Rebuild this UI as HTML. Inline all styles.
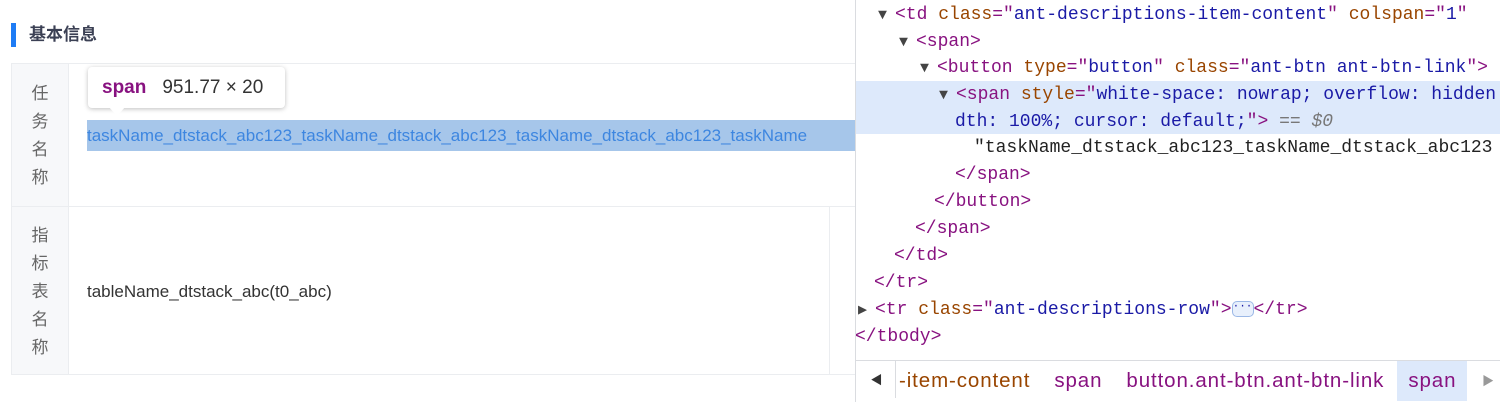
<!DOCTYPE html>
<html><head><meta charset="utf-8"><style>
body{margin:0;width:1500px;height:402px;overflow:hidden;background:#fff;position:relative;font-family:"Liberation Sans","Noto Sans CJK SC",sans-serif}
.abs{position:absolute}
.mono{font-family:"Liberation Mono","DejaVu Sans Mono",monospace;font-size:18px;white-space:pre;line-height:27px;margin-top:2px}
.tag{color:#881280}.attr{color:#994500}.val{color:#1a1aa6}
.tri{color:#444;font-size:15px;display:inline-block;width:17px}
</style></head><body>
<!-- left -->
<div class="abs" style="left:11px;top:23px;width:5px;height:24px;background:#1e7cf5"></div>
<div class="abs" style="left:29px;top:23px;font-size:17px;font-weight:bold;color:#3b4054;line-height:24px">基本信息</div>
<div class="abs" style="left:11px;top:63px;width:844px;height:312px;border:1px solid #ebedf0;border-right:none;box-sizing:border-box"></div>
<div class="abs" style="left:12px;top:64px;width:56px;height:310px;background:#f7f8fa;border-right:1px solid #ebedf0"></div>
<div class="abs" style="left:12px;top:206px;width:843px;height:1px;background:#ebedf0"></div>
<div class="abs" style="left:829px;top:206px;width:1px;height:169px;background:#ebedf0"></div>
<div class="abs" style="left:28px;top:80px;width:24px;font-size:17px;color:#666;line-height:28px;text-align:center">任<br>务<br>名<br>称</div>
<div class="abs" style="left:28px;top:222px;width:24px;font-size:17px;color:#666;line-height:28px;text-align:center">指<br>标<br>表<br>名<br>称</div>
<div class="abs" style="left:87px;top:120px;width:768px;height:31px;background:#a6c6ea;overflow:hidden;white-space:nowrap;font-size:17px;line-height:31px;color:#3d86e0">taskName_dtstack_abc123_taskName_dtstack_abc123_taskName_dtstack_abc123_taskName</div>
<div class="abs" style="left:87px;top:280px;font-size:17px;color:#333;line-height:24px">tableName_dtstack_abc(t0_abc)</div>
<div class="abs" style="left:88px;top:67px;width:197px;height:41px;background:#fff;border-radius:4px;box-shadow:0 1px 5px rgba(0,0,0,.25)"></div>
<div class="abs" style="left:108px;top:106px;width:0;height:0;border-left:9px solid transparent;border-right:9px solid transparent;border-top:10px solid #fff"></div>
<div class="abs" style="left:102px;top:76px;font-size:19px;line-height:24px;white-space:nowrap"><b style="color:#881280">span</b><span style="color:#333;margin-left:16px">951.77 × 20</span></div>
<!-- right -->
<div class="abs" style="left:855px;top:0;width:1px;height:402px;background:#dadce0"></div>
<div class="abs" style="left:856px;top:81px;width:644px;height:53px;background:#dde9fb"></div>
<div class="abs mono" style="left:878px;top:0"><span class="tri">▼</span><span class="tag">&lt;td </span><span class="attr">class</span><span class="tag">="</span><span class="val">ant-descriptions-item-content</span><span class="tag">"</span> <span class="attr">colspan</span><span class="tag">="</span><span class="val">1</span><span class="tag">"</span></div>
<div class="abs mono" style="left:899px;top:27px"><span class="tri">▼</span><span class="tag">&lt;span&gt;</span></div>
<div class="abs mono" style="left:920px;top:53px"><span class="tri">▼</span><span class="tag">&lt;button </span><span class="attr">type</span><span class="tag">="</span><span class="val">button</span><span class="tag">"</span> <span class="attr">class</span><span class="tag">="</span><span class="val">ant-btn ant-btn-link</span><span class="tag">"&gt;</span></div>
<div class="abs mono" style="left:939px;top:80px"><span class="tri">▼</span><span class="tag">&lt;span </span><span class="attr">style</span><span class="tag">="</span><span class="val">white-space: nowrap; overflow: hidden</span></div>
<div class="abs mono" style="left:955px;top:107px"><span class="val">dth: 100%; cursor: default;</span><span class="tag">"&gt;</span> <span style="color:#777">== <i>$0</i></span></div>
<div class="abs mono" style="left:974px;top:133px;color:#222">"taskName_dtstack_abc123_taskName_dtstack_abc123</div>
<div class="abs mono" style="left:955px;top:160px"><span class="tag">&lt;/span&gt;</span></div>
<div class="abs mono" style="left:934px;top:187px"><span class="tag">&lt;/button&gt;</span></div>
<div class="abs mono" style="left:915px;top:214px"><span class="tag">&lt;/span&gt;</span></div>
<div class="abs mono" style="left:894px;top:241px"><span class="tag">&lt;/td&gt;</span></div>
<div class="abs mono" style="left:874px;top:268px"><span class="tag">&lt;/tr&gt;</span></div>
<div class="abs mono" style="left:858px;top:295px"><span class="tri">▶</span><span class="tag">&lt;tr </span><span class="attr">class</span><span class="tag">="</span><span class="val">ant-descriptions-row</span><span class="tag">"&gt;</span><span style="display:inline-block;width:20px;height:14px;border:1px solid #9bb8e6;border-radius:5px;background:#e8f0fc;font-size:11px;line-height:10px;text-align:center;vertical-align:middle;color:#1a1aa6">···</span><span class="tag">&lt;/tr&gt;</span></div>
<div class="abs mono" style="left:855px;top:322px"><span class="tag">&lt;/tbody&gt;</span></div>
<div class="abs" style="left:856px;top:360px;width:644px;height:42px;background:#fff;border-top:1px solid #dadce0"></div>
<div class="abs" style="left:858px;top:361px;width:37px;height:37px;border-right:1px solid #dadce0;background:#fff;font-size:12px;line-height:38px;text-align:center;color:#333">◀</div>
<div class="abs" style="left:1397px;top:361px;width:70px;height:40px;background:#dde9fb"></div>
<div class="abs" style="left:1482px;top:361px;font-size:12px;line-height:40px;color:#999">▶</div>
<div class="abs" style="left:899px;top:361px;font-size:20.5px;letter-spacing:0.9px;line-height:40px;white-space:nowrap;color:#881280"><span style="color:#994500">-item-content</span><span style="margin-left:24px">span</span><span style="margin-left:24px">button.ant-btn.ant-btn-link</span><span style="margin-left:24px">span</span></div>
</body></html>
